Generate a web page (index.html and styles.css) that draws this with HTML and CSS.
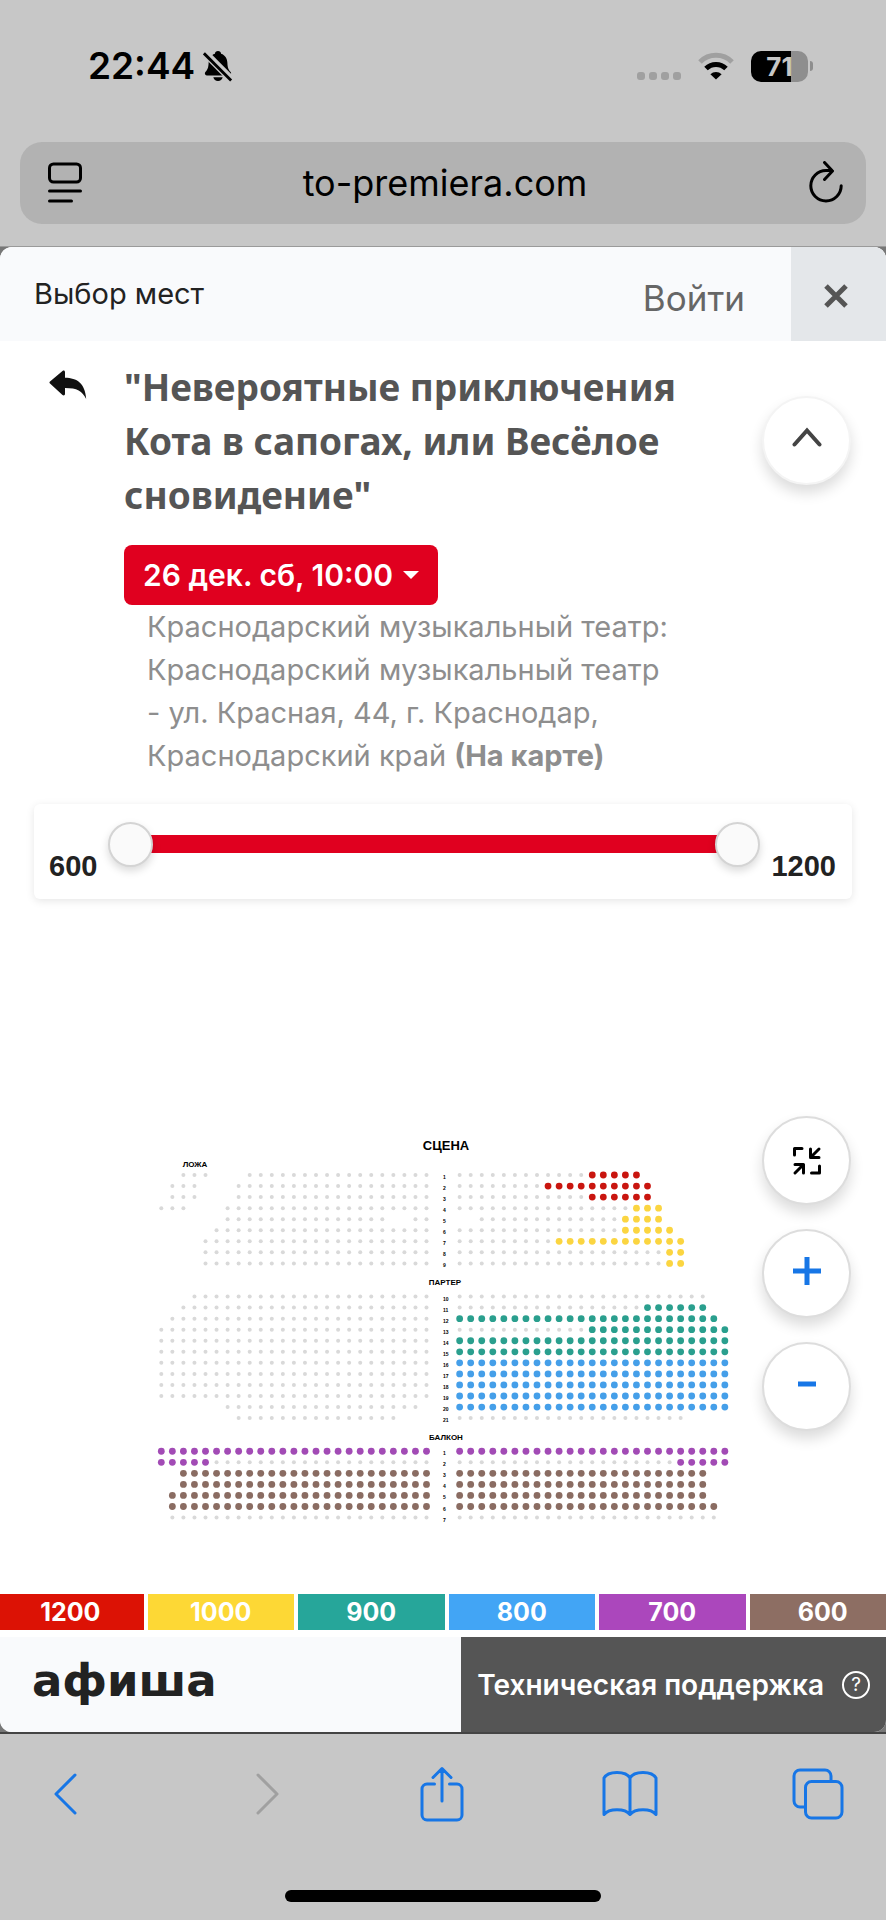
FILE: index.html
```html
<!DOCTYPE html>
<html lang="ru">
<head>
<meta charset="utf-8">
<meta name="viewport" content="width=device-width, initial-scale=1">
<title>Выбор мест</title>
<link rel="stylesheet" href="styles.css">
</head>
<body>
<div class="phone">
  <header class="status">
    <div class="status-left">
      <time class="clock">22:44</time>
      <svg class="bell" viewBox="0 0 32 34" aria-hidden="true">
        <path d="M16 1c2 0 3 1.200 3.300 2.800 4.500 1.500 6.500 5.200 6.700 9.700.2 5 1 7.500 3.500 10 1 1.200.6 3.500-1.500 3.500H4c-2.100 0-2.500-2.300-1.500-3.500 2.500-2.500 3.300-5 3.500-10 .2-4.500 2.200-8.200 6.700-9.700C13 2.200 14 1 16 1zM11 29h10c-.5 2.500-2.500 4-5 4s-4.500-1.500-5-4z"/>
        <path class="bell-gap" d="M1 2l31 31"/>
        <path class="bell-slash" d="M1 3.500l29 29"/>
      </svg>
    </div>
    <div class="status-right">
      <span class="signal"><i></i><i></i><i></i><i></i></span>
      <svg class="wifi" viewBox="0 0 36 28" aria-hidden="true">
        <path class="wifi-off" d="M2 10a22.500 22.500 0 0 1 32 0"/>
        <path class="wifi-on" d="M8 16.500a14.300 14.300 0 0 1 20 0"/>
        <path d="M18 27.500l-5.600-5.300a8 8 0 0 1 11.200 0z"/>
      </svg>
      <span class="battery"><span class="battery-body">71</span><span class="battery-nub"></span></span>
    </div>
  </header>

  <div class="urlbar">
    <button class="icon-button" aria-label="Меню страницы">
      <svg width="34" height="42" viewBox="0 0 34 42" class="line"><rect x="1.500" y="2" width="31" height="18" rx="4"/><path d="M1.500 29h31M1.500 39h22"/></svg>
    </button>
    <a class="address" href="#">to-premiera.com</a>
    <button class="icon-button" aria-label="Обновить">
      <svg width="36" height="44" viewBox="0 0 36 44" class="line"><path d="M18 9.500A15.200 15.200 0 1 0 33.200 24.700M18 9.500h6M16.500 1.500l8 8.500-8 8.500"/></svg>
    </button>
  </div>

  <div class="viewport">
    <main class="page">
      <div class="topbar">
        <h1 class="topbar-title">Выбор мест</h1>
        <a class="login" href="#">Войти</a>
        <button class="close" aria-label="Закрыть"><svg width="26" height="26" viewBox="0 0 26 26"><path d="M3 3l20 20M23 3l-20 20"/></svg></button>
      </div>

      <section class="event">
        <a class="back" href="#" aria-label="Назад"><svg width="38" height="30" viewBox="0 0 38 30"><path d="M1 11.500L13.500 1c1.200-1 2.500-.4 2.500 1.200v5.600C28 8 36 13 37.200 29c-4-8-9-11-21.200-11v5.800c0 1.600-1.300 2.200-2.500 1.200L1 13.500c-.7-.6-.7-1.400 0-2z"/></svg></a>
        <div class="event-info">
          <h2 class="event-title">"Невероятные приключения Кота в сапогах, или Весёлое сновидение"</h2>
          <button class="date">26 дек. сб, 10:00<span class="caret"></span></button>
          <p class="venue">Краснодарский музыкальный театр: Краснодарский музыкальный театр <span class="street">- ул. Красная,</span> 44, г. Краснодар, Краснодарский край <a href="#">(На карте)</a></p>
        </div>
        <button class="round round-plain" aria-label="Свернуть"><svg width="30" height="20" viewBox="0 0 30 20"><path d="M2.500 17.500L15 3.500l12.500 14"/></svg></button>
      </section>

      <section class="prices">
        <output class="price">600</output>
        <div class="slider">
          <input type="range" min="600" max="1200" value="600" aria-label="Минимальная цена">
          <input type="range" min="600" max="1200" value="1200" aria-label="Максимальная цена">
        </div>
        <output class="price">1200</output>
      </section>

      <section class="hall">
        <svg class="seatmap" id="seatmap" viewBox="0 0 886 410" role="img" aria-label="Схема зала"></svg>
        <div class="zoom">
          <button class="round" aria-label="Вся схема"><svg width="30" height="30" viewBox="0 0 30 30" class="fit"><path d="M2.500 9V2.500h7.500M27.500 20v7h-8"/><path class="fit-arrow" d="M27 3l-8 8M18.500 3v8.500h8.500M3 18.500h8.500v8.500M11 19l-8 8"/></svg></button>
          <button class="round round-sign" aria-label="Увеличить"><svg width="28" height="28" viewBox="0 0 28 28" class="sign"><path d="M0 14h28M14 0v28"/></svg></button>
          <button class="round round-sign" aria-label="Уменьшить"><svg width="28" height="28" viewBox="0 0 28 28" class="sign"><path d="M5 14h18"/></svg></button>
        </div>
      </section>

      <ul class="legend">
        <li class="p1200">1200</li><li class="p1000">1000</li><li class="p900">900</li><li class="p800">800</li><li class="p700">700</li><li class="p600">600</li>
      </ul>

      <footer class="footer">
        <a class="logo" href="#">афиша</a>
        <a class="support" href="#">Техническая поддержка
          <span class="help">?</span></a>
      </footer>
    </main>
  </div>

  <nav class="toolbar">
    <button class="tool" aria-label="Назад"><svg width="26" height="44" viewBox="0 0 26 44"><path d="M23 3L4 22l19 19"/></svg></button>
    <button class="tool" aria-label="Вперёд" disabled><svg width="26" height="44" viewBox="0 0 26 44"><path d="M3 3l19 19L3 41"/></svg></button>
    <button class="tool" aria-label="Поделиться"><svg width="44" height="56" viewBox="0 0 44 56"><path d="M14.500 18H7a5 5 0 0 0-5 5v26a5 5 0 0 0 5 5h30a5 5 0 0 0 5-5V23a5 5 0 0 0-5-5h-7.500M22 35V3M13 11.500L22 2.500l9 9"/></svg></button>
    <button class="tool" aria-label="Закладки"><svg width="56" height="48" viewBox="0 0 56 48"><path d="M28 8C24 .5 6 .5 2 8v36.500c5-6.500 21-6.500 26 0 5-6.500 21-6.500 26 0V8C50 .5 32 .5 28 8zM28 8v36"/></svg></button>
    <button class="tool" aria-label="Вкладки"><svg width="52" height="52" viewBox="0 0 52 52"><path d="M13.500 39H8a6 6 0 0 1-6-6V8a6 6 0 0 1 6-6h25a6 6 0 0 1 6 6v5.500"/><rect x="13.500" y="13.500" width="36.500" height="36.500" rx="6"/></svg></button>
  </nav>
  <div class="home"><span class="home-bar"></span></div>
</div>
<script src="seats.js"></script>
</body>
</html>
```

FILE: styles.css
```css
* { box-sizing: border-box; }
body { margin: 0; background: #c7c7c7; font-family: Inter, "Noto Sans", sans-serif; color: #222; }
h1, h2, p, ul { margin: 0; padding: 0; }
button { margin: 0; padding: 0; border: 0; background: none; color: inherit; font: inherit; }
a { color: inherit; text-decoration: none; }
svg { display: block; fill: none; }
.phone { display: flex; flex-direction: column; min-height: 100vh; }

.status { display: flex; align-items: center; justify-content: space-between; height: 142px; padding: 0 73px 10px 88px; }
.status-left { display: flex; align-items: center; gap: 8px; }
.clock { color: #000; font-size: 37px; font-weight: 600; line-height: 48px; }
.bell { width: 30px; height: 32px; fill: #000; }
.bell-gap { stroke: #c7c7c7; stroke-width: 8; }
.bell-slash { stroke: #000; stroke-width: 3; }
.status-right { display: flex; align-items: center; gap: 16px; }
.signal { display: flex; gap: 4px; padding-top: 20px; }
.signal i { width: 8px; height: 8px; border-radius: 3px; background: #a0a0a0; }
.wifi { width: 38px; height: 28px; fill: #000; }
.wifi-off { fill: none; stroke: #a0a0a0; stroke-width: 5; }
.wifi-on { fill: none; stroke: #000; stroke-width: 5; }
.battery { display: flex; align-items: center; gap: 2px; }
.battery-body { width: 57px; border-radius: 10px; background: linear-gradient(90deg, #000 71%, #8e8e8e 71%); color: #c7c7c7; font-size: 26px; font-weight: 700; line-height: 31px; text-align: center; }
.battery-nub { width: 3px; height: 10px; border-radius: 0 3px 3px 0; background: #8e8e8e; }

.urlbar { display: flex; align-items: center; justify-content: space-between; height: 82px; margin: 0 20px 22px; padding: 0 22px 0 28px; border-radius: 22px; background: #b2b2b2; color: #000; }
.line { stroke: currentColor; stroke-width: 3; stroke-linecap: round; stroke-linejoin: round; }
.address { font-size: 36px; line-height: 44px; }

.viewport { background: #777; border-top: 1px solid #9a9a9a; border-bottom: 2px solid #444; }
.page { overflow: hidden; border-radius: 12px; background: #fff; }
.topbar { display: flex; align-items: center; height: 94px; padding-left: 34px; background: #f9fafc; }
.topbar-title { flex: 1; font-size: 29px; font-weight: 400; line-height: 40px; }
.login { padding: 8px 46px 0 0; color: #666; font-size: 35px; line-height: 40px; }
.close { display: grid; place-items: center; align-self: stretch; width: 95px; padding: 4px 6px 0 0; background: #e4e7ea; }
.close svg { stroke: #555; stroke-width: 5; }

.event { display: flex; align-items: flex-start; padding: 19px 35px 0 49px; }
.back { padding-top: 10px; width: 75px; }
.back svg { fill: #111; }
.event-info { flex: 1; }
.event-title { max-width: 580px; color: #555; font-family: "Noto Sans", sans-serif; font-size: 37px; font-weight: 700; line-height: 54px; }
.date { display: flex; align-items: center; gap: 10px; margin-top: 23px; height: 60px; padding: 0 19px; border-radius: 8px; background: #e0001f; color: #fff; font-size: 30px; font-weight: 600; }
.caret { border: 8px solid transparent; border-top-color: #fff; border-bottom: 0; }
.venue { width: 563px; padding: 0 0 0 23px; color: #8e8e8e; font-size: 29px; line-height: 43px; }
.street { white-space: nowrap; }
.venue a { font-weight: 700; }
.round { display: grid; place-items: center; flex: none; width: 89px; height: 89px; border: 2px solid #ddd; border-radius: 50%; background: #fff; box-shadow: 0 8px 14px rgba(0, 0, 0, .14); }
.round-plain { margin-top: 36px; padding-bottom: 8px; border-color: #f4f4f4; }
.round-plain svg { stroke: #444; stroke-width: 4; stroke-linecap: round; }
.round-sign { padding-bottom: 6px; }

.prices { display: flex; align-items: flex-start; justify-content: space-between; gap: 11px; height: 95px; margin: 27px 34px 0; padding: 17px 16px 0 15px; border-radius: 6px; box-shadow: 0 2px 8px rgba(0, 0, 0, .1); }
.price { padding-top: 29px; font-family: "Liberation Sans", sans-serif; font-size: 29px; font-weight: 700; line-height: 32px; }
.slider { display: grid; flex: 1; align-items: center; height: 46px; background: linear-gradient(#e0001f, #e0001f) center / 94% 18px no-repeat; }
.slider input { grid-area: 1 / 1; width: 100%; height: 46px; margin: 0; background: none; appearance: none; pointer-events: none; }
.slider input::-webkit-slider-thumb { width: 45px; height: 45px; border: 2px solid #d4d4d4; border-radius: 50%; background: #fafafa; box-shadow: 0 4px 8px rgba(0, 0, 0, .15); appearance: none; pointer-events: auto; }

.hall { position: relative; padding: 221px 0 64px; }
.seatmap { width: 100%; font-family: "Liberation Sans", sans-serif; font-weight: 700; fill: #000; text-anchor: middle; }
.zoom { position: absolute; top: 217px; right: 35px; display: flex; flex-direction: column; gap: 24px; }
.fit { stroke: #000; stroke-width: 3; stroke-linejoin: round; stroke-linecap: round; }
.sign { stroke: #1776e6; stroke-width: 5; }
.stage { font-size: 13px; }
.zone { font-size: 8px; }
.row-number { font-size: 5px; text-anchor: start; }
.seat-x { fill: #d9d9d9; }
.seat-r { fill: #c9150f; }
.seat-y { fill: #fbd541; }
.seat-g { fill: #2a9f8e; }
.seat-b { fill: #459fe9; }
.seat-p { fill: #a24bb5; }
.seat-n { fill: #8a6c62; }

.legend { display: flex; gap: 4px; margin: 0 -10px 0 -3px; list-style: none; color: #fff; font-size: 25px; font-weight: 700; line-height: 36px; text-align: center; }
.legend li { flex: 1; }
.p1200 { background: #dc1205; }
.p1000 { background: #fdd835; }
.p900 { background: #26a69a; }
.p800 { background: #42a5f5; }
.p700 { background: #ab47bc; }
.p600 { background: #8d6e63; }

.footer { display: flex; height: 95px; margin-top: 7px; }
.logo { flex: 1; padding: 20px 0 0 32px; background: #f9fafc; color: #222; font-family: "DejaVu Sans", sans-serif; font-size: 45px; font-weight: 700; line-height: 48px; }
.support { display: flex; align-items: center; gap: 18px; padding: 0 16px; background: #555; color: #fff; font-size: 28px; font-weight: 600; }
.help { width: 28px; border: 2px solid #fff; border-radius: 50%; font-size: 19px; font-weight: 400; line-height: 24px; text-align: center; }

.toolbar { display: flex; align-items: center; justify-content: space-between; padding: 32px 40px 32px 37px; }
.tool { display: grid; justify-items: center; width: 56px; }
.toolbar svg { stroke: #1776e6; stroke-width: 3; stroke-linecap: round; stroke-linejoin: round; }
.toolbar .tool:disabled { justify-items: end; }
.toolbar .tool:disabled svg { stroke: #a0a0a0; }
.home { display: flex; justify-content: center; margin-top: auto; padding-bottom: 18px; }
.home-bar { width: 316px; height: 12px; border-radius: 6px; background: #000; }
```

FILE: seats.js
```js
// Each row: grid line, number, then runs of "price class, first column, last column".
// Columns 0-24 are the left block, 27-51 the right block.
const rows = [
  [0, 1, 'x2-4 x8-24 x27-38 r39-43'],
  [1, 2, 'x1-3 x7-24 x27-34 r35-44'],
  [2, 3, 'x1-3 x7-24 x27-38 r39-44'],
  [3, 4, 'x0-2 x6-24 x27-42 y43-45'],
  [4, 5, 'x6-20 x23-24 x29-41 y42-45'],
  [5, 6, 'x5-24 x27-41 y42-46'],
  [6, 7, 'x4-24 x27-35 y36-47'],
  [7, 8, 'x4-24 x27-45 y46-47'],
  [8, 9, 'x4-24 x27-45 y46-47'],
  [11, 10, 'x3-24 x27-49'],
  [12, 11, 'x2-24 x27-43 g44-49'],
  [13, 12, 'x1-24 g27-50'],
  [14, 13, 'x0-24 x27-38 g39-51'],
  [15, 14, 'x0-24 g27-51'],
  [16, 15, 'x0-24 g27-51'],
  [17, 16, 'x0-24 b27-51'],
  [18, 17, 'x0-24 b27-51'],
  [19, 18, 'x0-24 b27-51'],
  [20, 19, 'x0-24 b27-51'],
  [21, 20, 'x6-23 b27-51'],
  [22, 21, 'x7-21 x27-47'],
  [25, 1, 'p0-24 p27-51'],
  [26, 2, 'p0-4 x5-24 x27-46 p47-51'],
  [27, 3, 'n2-24 n27-49'],
  [28, 4, 'n2-24 n27-49'],
  [29, 5, 'n1-24 n27-49'],
  [30, 6, 'n1-24 n27-50'],
  [31, 7, 'x1-24 x27-50']
];
const titles = [
  ['stage', 446, 30, 'СЦЕНА'],
  ['zone', 195, 47, 'ЛОЖА'],
  ['zone', 445, 165, 'ПАРТЕР'],
  ['zone', 446, 320, 'БАЛКОН']
];
const map = document.getElementById('seatmap');
const pitch = 11.05;

function add(name, attributes, text) {
  const node = document.createElementNS('http://www.w3.org/2000/svg', name);
  for (const key in attributes) node.setAttribute(key, attributes[key]);
  if (text) node.textContent = text;
  map.append(node);
}

for (const [style, x, y, text] of titles) add('text', { class: style, x, y }, text);

for (const [line, number, runs] of rows) {
  const y = 55 + line * pitch;
  add('text', { class: 'row-number', x: 443, y: y + 4 }, String(number));
  for (const run of runs.split(' ')) {
    const [first, last] = run.slice(1).split('-').map(Number);
    for (let column = first; column <= last; column++) {
      add('circle', { class: 'seat-' + run[0], cx: 161.3 + column * pitch, cy: y, r: run[0] === 'x' ? 2 : 3.4 });
    }
  }
}
```
